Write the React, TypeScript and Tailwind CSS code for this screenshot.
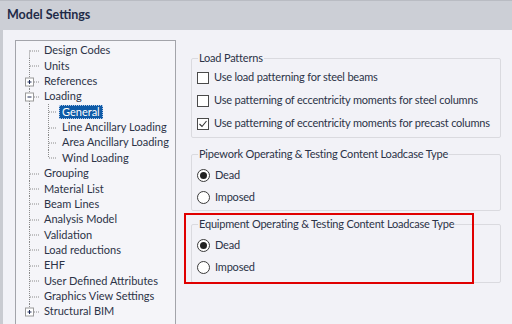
import React from "react";

type Item = { label: string; level: 0 | 1; exp?: "+" | "-"; selected?: boolean };

const items: Item[] = [
  { label: "Design Codes", level: 0 },
  { label: "Units", level: 0 },
  { label: "References", level: 0, exp: "+" },
  { label: "Loading", level: 0, exp: "-" },
  { label: "General", level: 1, selected: true },
  { label: "Line Ancillary Loading", level: 1 },
  { label: "Area Ancillary Loading", level: 1 },
  { label: "Wind Loading", level: 1 },
  { label: "Grouping", level: 0 },
  { label: "Material List", level: 0 },
  { label: "Beam Lines", level: 0 },
  { label: "Analysis Model", level: 0 },
  { label: "Validation", level: 0 },
  { label: "Load reductions", level: 0 },
  { label: "EHF", level: 0 },
  { label: "User Defined Attributes", level: 0 },
  { label: "Graphics View Settings", level: 0 },
  { label: "Structural BIM", level: 0, exp: "+" },
];

const RH = 15.35;
const LINE = "#8a8a8a";

function TreeLines({ idx, item }: { idx: number; item: Item }) {
  const mid = 7.5;
  const last = idx === items.length - 1;
  const first = idx === 0;
  const w = item.level === 0 ? 28 : 43;
  const isLastChild = item.level === 1 && (idx + 1 >= items.length || items[idx + 1].level === 0);
  return (
    <svg width={w} height={RH} className="shrink-0 block">
      <line
        x1={13.5}
        x2={13.5}
        y1={first ? mid : 0}
        y2={last ? mid : RH}
        stroke={LINE}
        strokeWidth={1}
        strokeDasharray="1 1"
      />
      {item.level === 0 && !item.exp && (
        <line x1={14} x2={23} y1={mid + 0.5} y2={mid + 0.5} stroke={LINE} strokeDasharray="1 1" />
      )}
      {item.level === 0 && item.exp && (
        <g>
          <rect x={9.5} y={mid - 3.5} width={8} height={8} fill="#ffffff" stroke="#9a9a9a" />
          <line x1={11.5} x2={15.5} y1={mid + 0.5} y2={mid + 0.5} stroke="#1e2a55" />
          {item.exp === "+" && <line x1={13.5} x2={13.5} y1={mid - 1.5} y2={mid + 2.5} stroke="#1e2a55" />}
          <line x1={18} x2={23} y1={mid + 0.5} y2={mid + 0.5} stroke={LINE} strokeDasharray="1 1" />
        </g>
      )}
      {item.label === "Loading" && (
        <line x1={32.5} x2={32.5} y1={RH - 2} y2={RH} stroke={LINE} strokeDasharray="1 1" />
      )}
      {item.level === 1 && (
        <g>
          <line
            x1={32.5}
            x2={32.5}
            y1={0}
            y2={isLastChild ? mid : RH}
            stroke={LINE}
            strokeDasharray="1 1"
          />
          <line x1={33} x2={41} y1={mid + 0.5} y2={mid + 0.5} stroke={LINE} strokeDasharray="1 1" />
        </g>
      )}
    </svg>
  );
}

function Checkbox({ checked }: { checked?: boolean }) {
  return (
    <span className="w-[12px] h-[12px] border border-[#4a4a4a] bg-white flex items-center justify-center shrink-0">
      {checked && (
        <svg width="10" height="10" viewBox="0 0 10 10">
          <path d="M1.5 5 L4 7.5 L8.5 2" fill="none" stroke="#333" strokeWidth="1.1" />
        </svg>
      )}
    </span>
  );
}

function Radio({ checked }: { checked?: boolean }) {
  return (
    <span className="w-[13px] h-[13px] rounded-full border border-[#3a3a3a] bg-white flex items-center justify-center shrink-0">
      {checked && <span className="w-[7px] h-[7px] rounded-full bg-[#222]" />}
    </span>
  );
}

function Group({ title, children, className = "" }: { title: string; children: React.ReactNode; className?: string }) {
  return (
    <fieldset className={`border border-[#dadadf] rounded-[2px] px-[5px] ${className}`}>
      <legend className="px-[1px] ml-[1px] leading-[14px] whitespace-nowrap">{title}</legend>
      {children}
    </fieldset>
  );
}

export default function App() {
  return (
    <div
      className="w-[512px] h-[324px] overflow-hidden bg-[#f2f2f7] text-[#2c3347] text-[11px] flex flex-col"
      style={{ fontFamily: "Lato, 'Noto Sans', sans-serif" }}
    >
      <div className="h-[30px] shrink-0 bg-[#cccfd6] border-t border-[#b9bcc3] flex items-center pl-[7px] font-bold text-[12.5px] text-[#1f2b48]">
        Model Settings
      </div>
      <div className="flex flex-1 min-h-0 border-l-[3px] border-[#c9cbd1]">
        <div className="ml-[12px] mt-[10px] w-[161px] h-[300px] shrink-0 border border-[#a3a4aa] bg-[#f5f5f9] pt-[2px]">
          {items.map((it, i) => (
            <div key={it.label} className="flex items-center" style={{ height: RH }}>
              <TreeLines idx={i} item={it} />
              {it.selected ? (
                <span className="bg-[#0e5aa7] text-white px-[3px] leading-[14px] outline outline-1 outline-dotted outline-[#b0c8e8] -outline-offset-1">
                  {it.label}
                </span>
              ) : (
                <span className={it.level === 1 ? "pl-[3px] whitespace-nowrap" : "whitespace-nowrap"}>{it.label}</span>
              )}
            </div>
          ))}
        </div>
        <div className="relative flex-1 pt-[21px] pl-[15px] pr-[11px] tracking-[-0.2px]">
          <Group title="Load Patterns" className="pb-[2px]">
            <div className="flex flex-col mt-[1px]">
              {[
                ["Use load patterning for steel beams", false],
                ["Use patterning of eccentricity moments for steel columns", false],
                ["Use patterning of eccentricity moments for precast columns", true],
              ].map(([t, c]) => (
                <div key={t as string} className="h-[23px] flex items-center gap-[5px] whitespace-nowrap">
                  <Checkbox checked={c as boolean} />
                  <span>{t as string}</span>
                </div>
              ))}
            </div>
          </Group>
          <Group title="Pipework Operating & Testing Content Loadcase Type" className="mt-[9px] pb-[2px]">
            <div className="h-[22px] flex items-center gap-[5px] mt-[3px]">
              <Radio checked />
              <span>Dead</span>
            </div>
            <div className="h-[22px] flex items-center gap-[5px]">
              <Radio />
              <span>Imposed</span>
            </div>
          </Group>
          <Group title="Equipment Operating & Testing Content Loadcase Type" className="mt-[6px] pb-[4px]">
            <div className="h-[22px] flex items-center gap-[5px] mt-[3px]">
              <Radio checked />
              <span>Dead</span>
            </div>
            <div className="h-[22px] flex items-center gap-[5px]">
              <Radio />
              <span>Imposed</span>
            </div>
          </Group>
          <div className="absolute left-[8px] top-[183px] w-[290px] h-[71px] border-2 border-[#e00000] pointer-events-none" />
        </div>
      </div>
    </div>
  );
}
